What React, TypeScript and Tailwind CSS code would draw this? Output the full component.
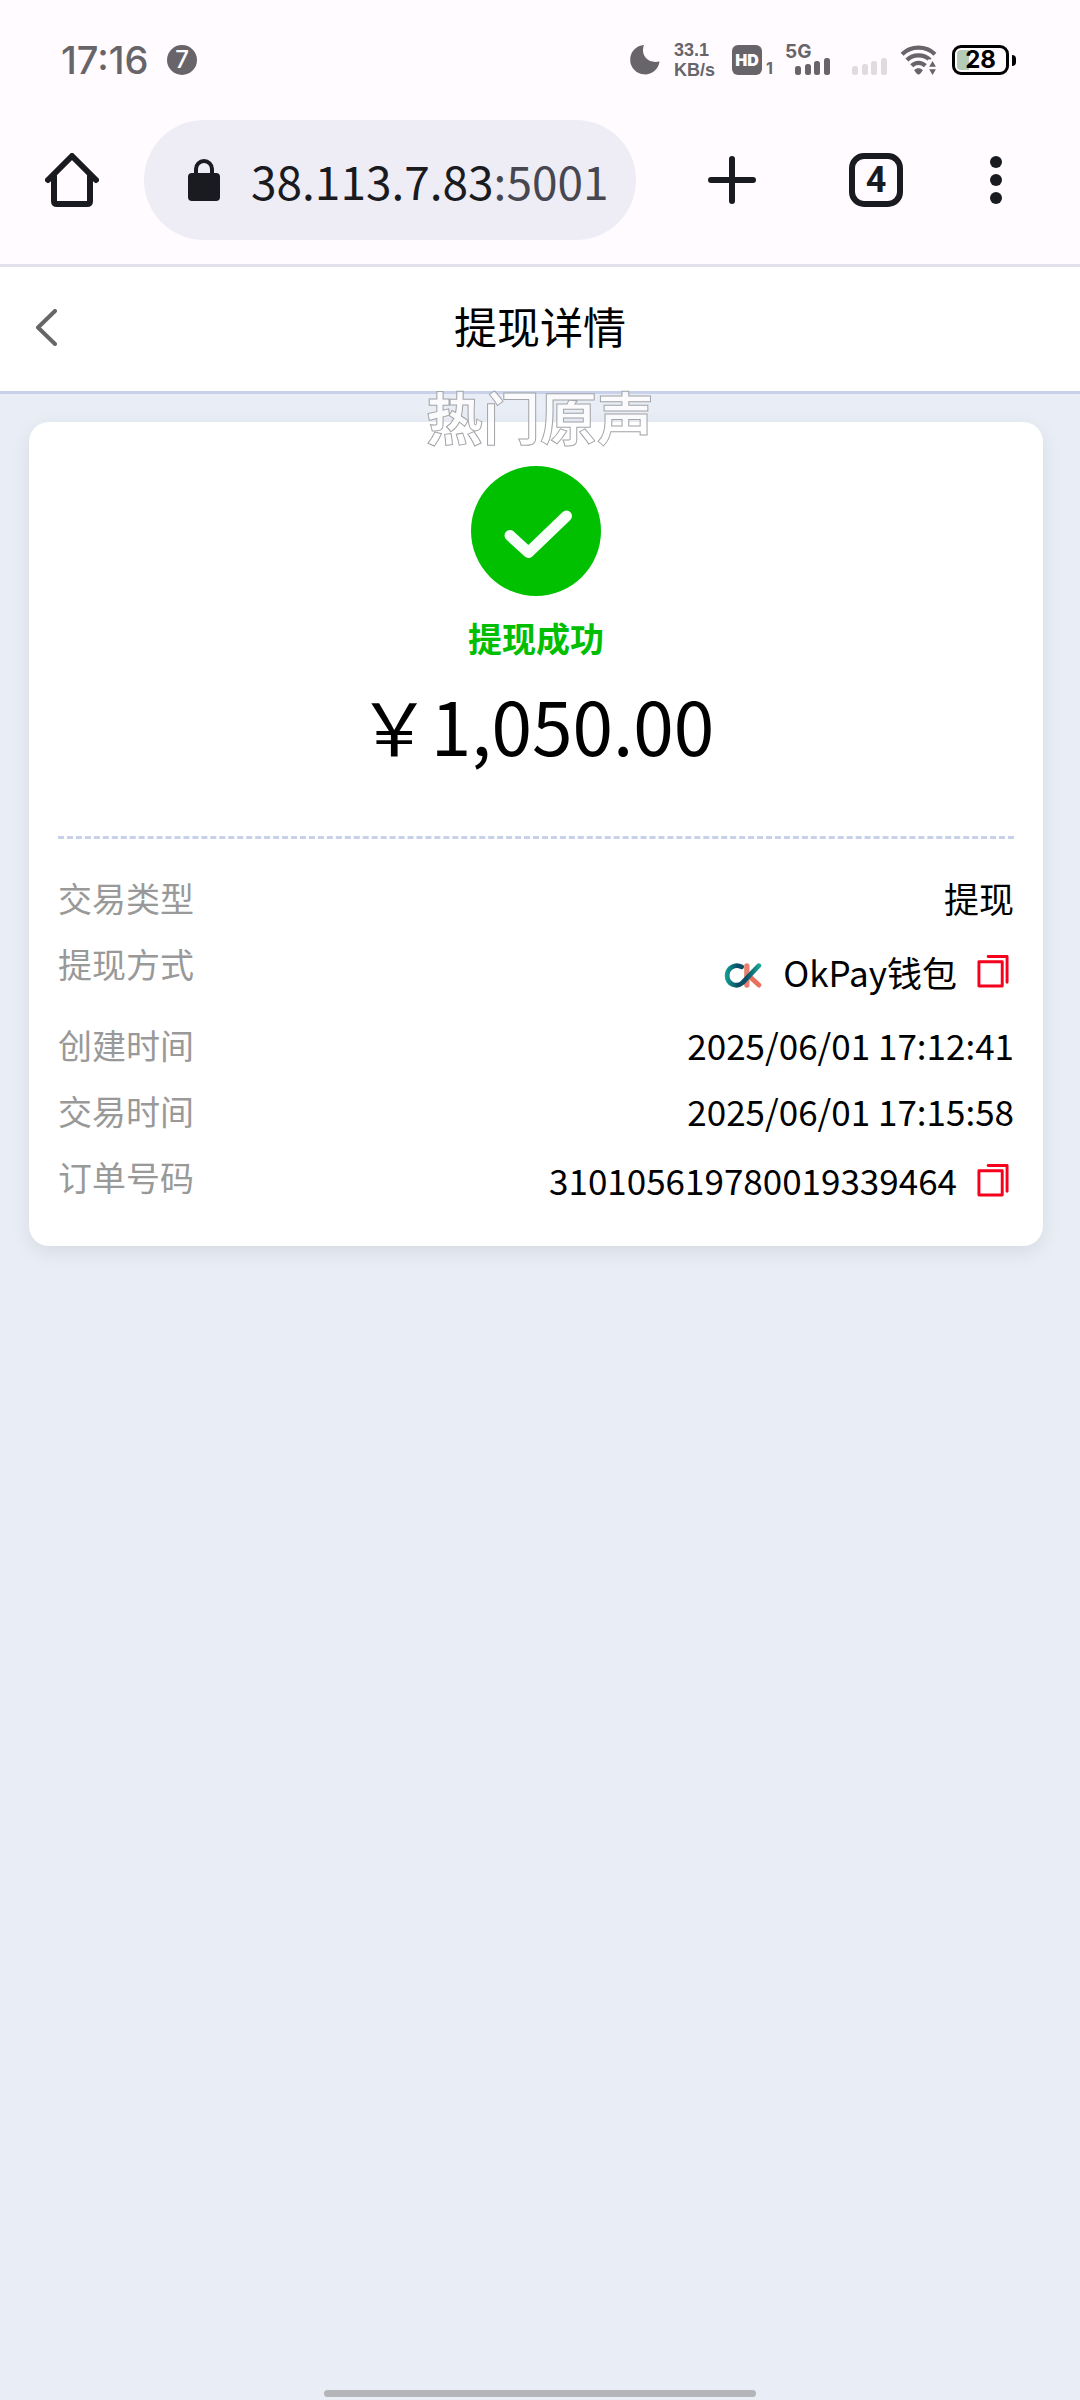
import { useState } from "react";
import type { ReactNode } from "react";

type DetailItem = {
  label: string;
  value: string;
  size: "normal" | "wallet" | "order";
  logo?: boolean;
  copyable?: boolean;
};

const details: DetailItem[] = [
  { label: "交易类型", value: "提现", size: "normal" },
  {
    label: "提现方式",
    value: "OkPay钱包",
    size: "wallet",
    logo: true,
    copyable: true,
  },
  { label: "创建时间", value: "2025/06/01 17:12:41", size: "normal" },
  { label: "交易时间", value: "2025/06/01 17:15:58", size: "normal" },
  {
    label: "订单号码",
    value: "310105619780019339464",
    size: "order",
    copyable: true,
  },
];

const rowHeights = {
  normal: "h-[50px]",
  wallet: "h-[65px]",
  order: "h-[56px]",
};

function SignalBars({ className }: { className: string }) {
  return (
    <svg className={className} width="35" height="17" viewBox="0 0 35 17">
      <rect x="0" y="8" width="6" height="9" rx="2.5" fill="currentColor" />
      <rect x="10" y="6" width="6" height="11" rx="2.5" fill="currentColor" />
      <rect x="19" y="3" width="6" height="14" rx="2.5" fill="currentColor" />
      <rect x="29" y="0" width="6" height="17" rx="2.5" fill="currentColor" />
    </svg>
  );
}

function WifiIcon() {
  return (
    <svg width="38" height="30" viewBox="0 0 38 31" fill="none">
      <g stroke="currentColor" strokeWidth="4.4">
        <path d="M1.5 9.5C11 .6 26 .6 35.5 9.5" />
        <path d="M6.5 15.5C13 9 24 9 30.5 15.5" />
        <path d="M11.5 21.5C15.5 17.5 21.5 17.5 25.5 21.5" />
      </g>
      <path
        d="M14 26c2.5-2.600 6.500-2.600 9 0l-2.500 3.500q-2 1.800-4 0z"
        fill="currentColor"
      />
      <path d="M28 22V15h10v7z" fill="#fffbff" />
      <path
        d="M29.500 22.500L33 16.500l3.500 6zM29.500 25h7L33 31z"
        fill="currentColor"
      />
    </svg>
  );
}

function StatusBar() {
  return (
    <div className="flex h-[120px] items-center pl-[61px] pr-16 font-['Inter',sans-serif] text-[#67656a]">
      <span className="w-[90px] text-[38px] leading-none font-medium">
        17:16
      </span>
      <span className="ml-4 flex size-[30px] items-center justify-center rounded-full bg-[#67656a] text-2xl leading-none font-medium text-[#fffbff]">
        7
      </span>
      <svg className="ml-auto" width="30" height="30" viewBox="0 0 30 31">
        <path
          d="M14 0C10 9 17 20 30 17A15.200 15.200 0 1 1 14 0Z"
          fill="currentColor"
        />
      </svg>
      <p className="ml-[14px] w-[44px] font-['Liberation_Sans',sans-serif] text-[18px] leading-[20px] font-bold">
        33.1
        <br />
        KB/s
      </p>
      <div className="ml-[14px] flex items-end gap-1">
        <span className="flex h-[30px] w-[30px] items-center justify-center rounded-md bg-current text-[16px] font-black">
          <span className="text-[#fffbff]">HD</span>
        </span>
        <span className="w-2 text-base leading-[14px] font-bold">1</span>
      </div>
      <div className="ml-[11px] flex flex-col">
        <span className="h-[13px] text-[19px] leading-[14px] font-bold">5G</span>
        <SignalBars className="ml-[10px]" />
      </div>
      <SignalBars className="mt-[13px] ml-[22px] text-[#dfdcdf]" />
      <span className="ml-[13px]">
        <WifiIcon />
      </span>
      <div className="ml-[14px] flex items-center gap-[3px] text-black">
        <div className="flex h-[30px] w-[57px] rounded-[9px] border-3 border-black p-0.5">
          <div className="flex w-full items-center justify-center rounded-sm bg-linear-to-r from-[#b4cbb6] from-25% to-transparent to-25% text-2xl leading-none font-bold">
            28
          </div>
        </div>
        <span className="h-[11px] w-1 rounded-r-full bg-black" />
      </div>
    </div>
  );
}

function BrowserBar() {
  return (
    <div className="flex items-center border-b-3 border-[#e2e1ec] pr-[78px] pb-6 pl-[45px] text-[#1a1b20]">
      <button type="button" aria-label="主页">
        <svg
          width="54"
          height="54"
          viewBox="0 0 54 54"
          fill="none"
          stroke="currentColor"
          strokeWidth="6"
          strokeLinecap="round"
        >
          <path d="M3 27L27 3l24 24" strokeLinejoin="round" />
          <path d="M9 23v25q0 3 3 3h30q3 0 3-3V23" />
        </svg>
      </button>
      <button
        type="button"
        className="ml-[45px] flex h-[120px] min-w-0 flex-1 items-center rounded-full bg-[#eeedf6] pl-11"
      >
        <svg width="32" height="42" viewBox="0 0 32 42">
          <rect y="14" width="32" height="28" rx="4" fill="currentColor" />
          <path
            d="M8 16v-6a8 8 0 0 1 16 0v6"
            fill="none"
            stroke="currentColor"
            strokeWidth="4"
          />
        </svg>
        <span className="ml-[31px] text-[46px] leading-none">
          38.113.7.83<span className="text-[#474751]">:5001</span>
        </span>
      </button>
      <button type="button" aria-label="新标签页" className="ml-[72px]">
        <svg
          width="48"
          height="48"
          viewBox="0 0 48 48"
          stroke="currentColor"
          strokeWidth="6"
          strokeLinecap="round"
        >
          <path d="M24 3v42M3 24h42" />
        </svg>
      </button>
      <button
        type="button"
        className="ml-[93px] flex size-[54px] items-center justify-center rounded-[15px] border-6 border-current font-['Roboto',sans-serif] text-4xl leading-none font-bold"
      >
        4
      </button>
      <button type="button" aria-label="更多" className="ml-[87px]">
        <svg width="12" height="48" viewBox="0 0 12 48" fill="currentColor">
          <circle cx="6" cy="6" r="6" />
          <circle cx="6" cy="24" r="6" />
          <circle cx="6" cy="42" r="6" />
        </svg>
      </button>
    </div>
  );
}

function PageHeader() {
  return (
    <header className="relative flex h-[127px] items-center justify-center border-b-3 border-[#c8d0ea] bg-white pb-2">
      <button
        type="button"
        aria-label="返回"
        className="absolute top-0 left-0 flex h-full items-center pr-6 pb-1 pl-[35px]"
      >
        <svg width="22" height="37" viewBox="0 0 22 37" fill="none">
          <path
            d="M20 2L3 18.5l17 16.5"
            stroke="#666666"
            strokeWidth="4"
            strokeLinecap="round"
            strokeLinejoin="round"
          />
        </svg>
      </button>
      <h1 className="text-[43px] text-black">提现详情</h1>
      <span className="absolute top-full left-1/2 -mt-1 -translate-x-1/2 text-[57px] leading-[56px] font-bold whitespace-nowrap text-white/80 [-webkit-text-stroke:1px_#a3a5a9]">
        热门原声
      </span>
    </header>
  );
}

function OkPayLogo() {
  return (
    <svg width="38" height="25" viewBox="0 0 38 26" fill="none">
      <defs>
        <linearGradient
          id="okTeal"
          x1="0"
          y1="0"
          x2="38"
          y2="0"
          gradientUnits="userSpaceOnUse"
        >
          <stop offset="0" stopColor="#15a596" />
          <stop offset=".35" stopColor="#0b4f66" />
          <stop offset=".6" stopColor="#0b4f66" />
          <stop offset="1" stopColor="#1fb09a" />
        </linearGradient>
      </defs>
      <g strokeLinecap="round">
        <path d="M23 3v20" stroke="#e8806d" strokeWidth="5.5" />
        <path d="M27 15l8.5 8" stroke="#e8705c" strokeWidth="5" />
        <path
          d="M17.5 4C11 .5 2.5 5 2.5 13C2.5 22 12 26 18.5 20.5L35.5 2.8"
          stroke="url(#okTeal)"
          strokeWidth="5"
        />
      </g>
    </svg>
  );
}

function CopyButton({ text }: { text: string }) {
  const [copied, setCopied] = useState(false);

  const handleCopy = () => {
    navigator.clipboard?.writeText(text);
    setCopied(true);
  };

  return (
    <button
      type="button"
      aria-label={copied ? "已复制" : "复制"}
      onClick={handleCopy}
      className="mr-[5px] ml-5"
    >
      <svg
        width="32"
        height="33"
        viewBox="0 0 32 34"
        fill="none"
        stroke="#f5001d"
        strokeWidth="3"
        strokeLinecap="round"
        strokeLinejoin="round"
      >
        <rect x="1.5" y="7" width="24" height="25" />
        <path d="M11 1.5h19.5V28" />
      </svg>
    </button>
  );
}

function DetailRow({
  item,
  children,
}: {
  item: DetailItem;
  children: ReactNode;
}) {
  return (
    <div className="flex items-start justify-between">
      <dt className="text-[34px] leading-[50px] text-[#999999]">
        {item.label}
      </dt>
      <dd className={`flex items-center text-black ${rowHeights[item.size]}`}>
        {children}
      </dd>
    </div>
  );
}

export default function App() {
  return (
    <div className="flex min-h-screen flex-col bg-[#e9edf5] font-['Noto_Sans_CJK_SC',sans-serif]">
      <div className="bg-[#fffbff]">
        <StatusBar />
        <BrowserBar />
      </div>
      <PageHeader />

      <main className="pt-7 pr-[37px] pl-[29px]">
        <section className="rounded-[20px] bg-white px-[29px] pt-11 pb-[38px] shadow-[0_6px_20px_rgba(0,0,0,0.08)]">
          <div className="flex flex-col items-center">
            <svg width="130" height="130" viewBox="0 0 130 130">
              <circle cx="65" cy="65" r="65" fill="#00c000" />
              <path
                d="M39 69.5l18.5 17L95.5 50"
                fill="none"
                stroke="#f8fffb"
                strokeWidth="11"
                strokeLinecap="round"
                strokeLinejoin="round"
              />
            </svg>
            <p className="mt-[22px] text-[34px] leading-10 font-bold text-[#00be00]">
              提现成功
            </p>
            <p className="mt-[26px] text-[73px] leading-20 text-black">
              ￥1,050.00
            </p>
          </div>

          <dl className="mt-[72px] flex flex-col gap-4 border-t-3 border-dashed border-[#c8d0ea] pt-[34px]">
            {details.map((item) => (
              <DetailRow key={item.label} item={item}>
                {item.logo && (
                  <span className="mt-2 mr-[21px]">
                    <OkPayLogo />
                  </span>
                )}
                <span className="text-[35px] leading-[50px]">{item.value}</span>
                {item.copyable && <CopyButton text={item.value} />}
              </DetailRow>
            ))}
          </dl>
        </section>
      </main>

      <div className="mx-auto mt-auto mb-[3px] h-[7px] w-2/5 rounded-full bg-[#b3b5b9]" />
    </div>
  );
}
